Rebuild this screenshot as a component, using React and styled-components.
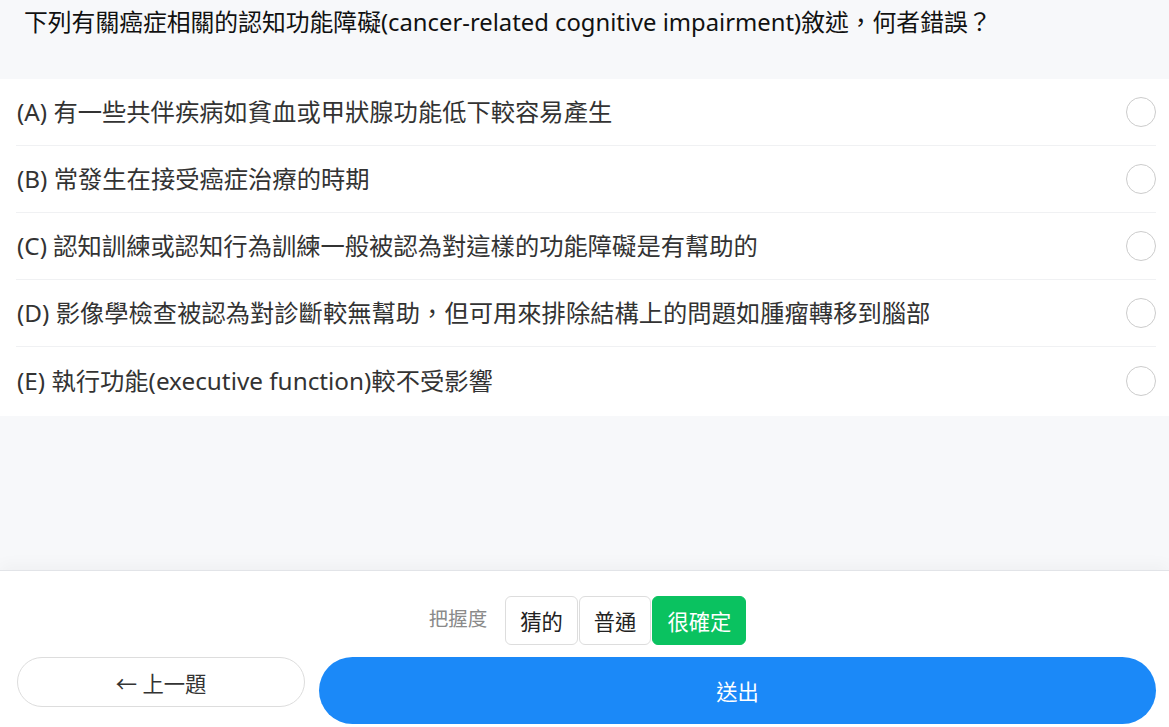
import styled, { createGlobalStyle } from "styled-components";

const GlobalStyle = createGlobalStyle`
    html, body {
        margin: 0;
        padding: 0;
        background: #F7F8FA;
    }
    * {
        box-sizing: border-box;
    }
    body {
        font-family: "Noto Sans", "Noto Sans CJK TC", sans-serif;
    }
`;

const options = [
    {key: "A", text: "有一些共伴疾病如貧血或甲狀腺功能低下較容易產生"},
    {key: "B", text: "常發生在接受癌症治療的時期"},
    {key: "C", text: "認知訓練或認知行為訓練一般被認為對這樣的功能障礙是有幫助的"},
    {key: "D", text: "影像學檢查被認為對診斷較無幫助，但可用來排除結構上的問題如腫瘤轉移到腦部"},
    {key: "E", text: "執行功能(executive function)較不受影響"},
];

const levels = ["猜的", "普通", "很確定"];

export default function App() {
    return (
        <Page>
            <GlobalStyle/>
            <Main>
                <Question>
                    下列有關癌症相關的認知功能障礙(cancer-related cognitive impairment)敘述，何者錯誤？
                </Question>
                <OptionList>
                    {options.map((o) => (
                        <OptionRow key={o.key}>
                            <OptionText>({o.key}) {o.text}</OptionText>
                            <Radio/>
                        </OptionRow>
                    ))}
                </OptionList>
            </Main>
            <Footer>
                <ConfidenceRow>
                    <ConfidenceLabel>把握度</ConfidenceLabel>
                    <Segments>
                        {levels.map((l) => (
                            <Segment key={l} $active={l === "很確定"}>{l}</Segment>
                        ))}
                    </Segments>
                </ConfidenceRow>
                <ActionRow>
                    <PrevButton>← 上一題</PrevButton>
                    <SendButton>送出</SendButton>
                </ActionRow>
            </Footer>
        </Page>
    );
}

const Page = styled.div`
    height: 100vh;
    display: flex;
    flex-direction: column;
    background: #F7F8FA;
`;

const Main = styled.div`
    flex: 1;
`;

const Question = styled.div`
    height: 79px;
    padding: 5px 24px 0;
    font-size: 23.8px;
    line-height: 34px;
    color: #111;
`;

const OptionList = styled.div`
    background: #FFF;
    padding: 0 13px 2px 16px;
`;

const OptionRow = styled.div`
    height: 67px;
    display: flex;
    align-items: center;
    justify-content: space-between;
    border-bottom: 1px solid #F0F1F3;

    &:last-child {
        border-bottom: none;
    }
`;

const OptionText = styled.span`
    padding-left: 1px;
    margin-top: -3px;
    font-size: 24.3px;
    color: #333;
`;

const Radio = styled.span`
    width: 30px;
    height: 30px;
    border-radius: 50%;
    border: 1px solid #CCC;
    background: #FFF;
`;

const Footer = styled.div`
    background: #FFF;
    border-top: 1px solid #E2E4E8;
    box-shadow: 0 -6px 14px rgba(0, 0, 0, 0.03);
    padding: 25px 13px 3px 17px;
    display: flex;
    flex-direction: column;
    gap: 12px;
`;

const ConfidenceRow = styled.div`
    display: flex;
    justify-content: center;
    align-items: center;
    gap: 18px;
    padding-left: 2px;
`;

const ConfidenceLabel = styled.span`
    font-size: 19.5px;
    color: #8A8A8A;
    margin-top: -6px;
`;

const Segments = styled.div`
    display: flex;
    gap: 1px;
`;

const Segment = styled.button`
    height: 49px;
    padding: 0 14px;
    font-family: inherit;
    font-size: 21.3px;
    border-radius: 6px;
    border: 1px solid ${(p) => (p.$active ? "#0AC260" : "#DDD")};
    background: ${(p) => (p.$active ? "#0AC260" : "#FFF")};
    color: ${(p) => (p.$active ? "#FFF" : "#222")};
`;

const ActionRow = styled.div`
    display: grid;
    grid-template-columns: 288px 1fr;
    gap: 14px;
    align-items: start;
`;

const PrevButton = styled.button`
    height: 50px;
    border-radius: 25px;
    border: 1px solid #DDD;
    background: #FFF;
    font-family: inherit;
    font-size: 21.3px;
    color: #333;
`;

const SendButton = styled.button`
    height: 67px;
    border-radius: 34px;
    border: none;
    background: #1B89F8;
    color: #FFF;
    font-family: inherit;
    font-size: 21.3px;
`;
